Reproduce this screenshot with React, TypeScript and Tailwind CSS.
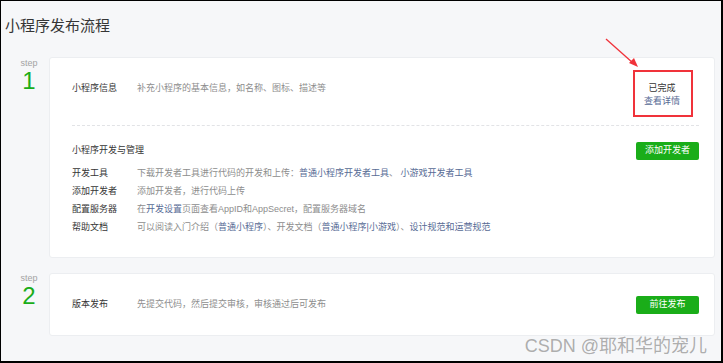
const font = { fontFamily: '"Liberation Sans","Noto Sans CJK SC",sans-serif' };

function Link({ children }: { children: React.ReactNode }) {
  return <span className="text-[#576b95]">{children}</span>;
}

function InfoRow({ label, children }: { label: string; children: React.ReactNode }) {
  return (
    <div className="flex h-[18px] items-center">
      <div className="w-[65px] shrink-0 text-[#353535]">{label}</div>
      <div className="text-[#8d8d8d]">{children}</div>
    </div>
  );
}

function StepLabel({ n }: { n: number }) {
  return (
    <div className="ml-[14px] mr-[6px] w-[28px] shrink-0 text-center">
      <div className="text-[9px] leading-[10px] text-[#a3a3a3]">step</div>
      <div className="text-[24px] leading-[26px] text-[#1aad19]">{n}</div>
    </div>
  );
}

export default function App() {
  return (
    <div
      className="relative h-[363px] w-[723px] overflow-hidden border-t border-l border-r-2 border-b-2 border-black bg-[#f6f7f9] text-[9px]"
      style={font}
    >
      {/* Title */}
      <h1 className="pl-[4px] pt-[15px] text-[15px] leading-[20px] text-[#353535]">小程序发布流程</h1>

      {/* Step 1 */}
      <div className="mt-[21px] flex">
        <div className="pt-[1px]">
          <StepLabel n={1} />
        </div>
        <div className="mr-[6px] flex-1 rounded-[3px] border border-[#eceef1] bg-white pb-[20px] pl-[22px] pr-[15px] pt-[24px]">
          <div className="flex items-start justify-between">
            <div className="flex h-[13px] items-center">
              <div className="w-[65px] text-[#353535]">小程序信息</div>
              <div className="text-[#8d8d8d]">补充小程序的基本信息，如名称、图标、描述等</div>
            </div>
            <div className="w-[74px] text-center leading-[13px]">
              <div className="text-[#353535]">已完成</div>
              <div className="text-[#576b95]">查看详情</div>
            </div>
          </div>

          <div className="mt-[17px] border-t border-dashed border-[#e2e3e6]" />

          <div className="mt-[16px] flex items-center justify-between">
            <div className="text-[#353535]">小程序开发与管理</div>
            <button className="flex h-[18px] w-[63px] items-center justify-center rounded-[2px] bg-[#1aad19] text-[9px] text-white">
              添加开发者
            </button>
          </div>

          <div className="mt-[5px]">
            <InfoRow label="开发工具">
              下载开发者工具进行代码的开发和上传：<Link>普通小程序开发者工具</Link>
              <span>、 </span>
              <Link>小游戏开发者工具</Link>
            </InfoRow>
            <InfoRow label="添加开发者">添加开发者，进行代码上传</InfoRow>
            <InfoRow label="配置服务器">
              在<Link>开发设置</Link>页面查看AppID和AppSecret，配置服务器域名
            </InfoRow>
            <InfoRow label="帮助文档">
              可以阅读入门介绍（<Link>普通小程序</Link>）、开发文档（<Link>普通小程序|小游戏</Link>）、
              <Link>设计规范和运营规范</Link>
            </InfoRow>
          </div>
        </div>
      </div>

      {/* Step 2 */}
      <div className="mt-[15px] flex">
        <div>
          <StepLabel n={2} />
        </div>
        <div className="mr-[6px] flex h-[63px] flex-1 items-center justify-between rounded-[3px] border border-[#eceef1] bg-white pl-[22px] pr-[15px]">
          <div className="flex items-center">
            <div className="w-[65px] text-[#353535]">版本发布</div>
            <div className="text-[#8d8d8d]">先提交代码，然后提交审核，审核通过后可发布</div>
          </div>
          <button className="flex h-[18px] w-[63px] items-center justify-center rounded-[2px] bg-[#1aad19] text-[9px] text-white">
            前往发布
          </button>
        </div>
      </div>

      {/* annotation: red box + arrow */}
      <div className="absolute left-[632px] top-[69px] h-[47px] w-[60px] border-2 border-[#f0323a]" />
      <svg className="absolute left-0 top-0" width="723" height="363">
        <line x1="605" y1="38" x2="632" y2="62" stroke="#f0323a" strokeWidth="1.3" />
        <polygon points="637,66 628,62 633,57" fill="#f0323a" />
      </svg>

      {/* watermark */}
      <div className="absolute right-[14px] top-[335px] text-[18px] leading-[20px] text-[#9a9a9a]/80">
        CSDN @耶和华的宠儿
      </div>
    </div>
  );
}
